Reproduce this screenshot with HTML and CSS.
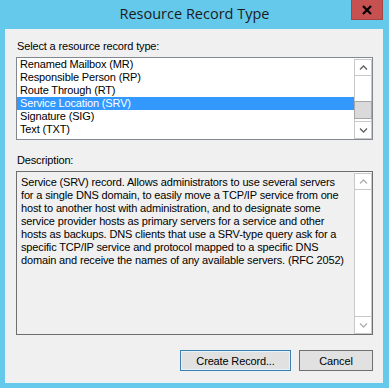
FILE: index.html
```html
<!DOCTYPE html>
<html lang="en">
<head>
  <meta charset="UTF-8" />
  <title>Resource Record Type</title>
  <link rel="stylesheet" href="styles.css">
</head>
<body>
  <div class="window">
    <div class="titlebar">
      <div class="title">Resource Record Type</div>
      <button class="close-btn" aria-label="Close">
        <svg viewBox="0 0 12 10" width="12" height="10">
          <path d="M2 1 L10 9 M10 1 L2 9" stroke="#000" stroke-width="2.2" fill="none"/>
        </svg>
      </button>
    </div>

    <div class="client">
      <div class="label">Select a resource record type:</div>
      <div class="listbox">
        <ul class="items">
          <li>Renamed Mailbox (MR)</li>
          <li>Responsible Person (RP)</li>
          <li>Route Through (RT)</li>
          <li class="selected">Service Location (SRV)</li>
          <li>Signature (SIG)</li>
          <li>Text (TXT)</li>
        </ul>
        <div class="scrollbar">
          <div class="sb-btn up">
            <svg viewBox="0 0 9 5" width="9" height="5"><path d="M1 4.5 L4.5 1 L8 4.5" /></svg>
          </div>
          <div class="sb-track">
            <div class="sb-thumb"></div>
          </div>
          <div class="sb-btn down">
            <svg viewBox="0 0 9 5" width="9" height="5"><path d="M1 0.5 L4.5 4 L8 0.5" /></svg>
          </div>
        </div>
      </div>

      <div class="label desc-label">Description:</div>
      <div class="description">
        <p class="desc-text">Service (SRV) record. Allows administrators to use several servers<br>
        for a single DNS domain, to easily move a TCP/IP service from one<br>
        host to another host with administration, and to designate some<br>
        service provider hosts as primary servers for a service and other<br>
        hosts as backups. DNS clients that use a SRV-type query ask for a<br>
        specific TCP/IP service and protocol mapped to a specific DNS<br>
        domain and receive the names of any available servers. (RFC 2052)</p>
        <div class="scrollbar disabled">
          <div class="sb-btn up">
            <svg viewBox="0 0 9 5" width="9" height="5"><path d="M1 4.5 L4.5 1 L8 4.5" /></svg>
          </div>
          <div class="sb-track"></div>
          <div class="sb-btn down">
            <svg viewBox="0 0 9 5" width="9" height="5"><path d="M1 0.5 L4.5 4 L8 0.5" /></svg>
          </div>
        </div>
      </div>

      <div class="buttons">
        <button class="btn default">Create Record...</button>
        <button class="btn cancel">Cancel</button>
      </div>
    </div>
  </div>
</body>
</html>
```

FILE: styles.css
```css
body {
  margin: 0;
  padding: 0;
  background: #64c9eb;
  font-family: "Liberation Sans", Arial, sans-serif;
  font-size: 11px;
  letter-spacing: -0.15px;
  color: #000;
}

.window {
  width: 389px;
  height: 388px;
  display: flex;
  flex-direction: column;
}

/* TITLE BAR */
.titlebar {
  position: relative;
  height: 29px;
  display: flex;
  justify-content: center;
}

.title {
  font-family: "Open Sans", "Noto Sans", sans-serif;
  font-size: 14.5px;
  letter-spacing: 0;
  color: #1c1c1c;
  line-height: 27px;
}

.close-btn {
  position: absolute;
  top: 0;
  right: 6px;
  width: 32px;
  height: 20px;
  padding: 0;
  border: 1px solid #a84343;
  border-top: none;
  background: #c75050;
  display: flex;
  align-items: center;
  justify-content: center;
}

/* CLIENT AREA */
.client {
  flex: 1;
  margin: 0 6px 5px 5px;
  background: #f0f0f0;
  padding: 11px 10px 12px 11px;
  display: flex;
  flex-direction: column;
}

.label {
  line-height: 13px;
  height: 13px;
  padding-left: 1px;
}

.listbox {
  margin-top: 4px;
  height: 81px;
  border: 1px solid #828790;
  background: #fff;
  display: flex;
}

.items {
  flex: 1;
  list-style: none;
  margin: 0;
  padding: 0;
}

.items li {
  height: 13px;
  line-height: 13px;
  padding-left: 3px;
  white-space: nowrap;
}

.items li.selected {
  background: #3399ff;
  color: #fff;
}

/* SCROLLBARS */
.scrollbar {
  width: 18px;
  padding-top: 1px;
  display: flex;
  flex-direction: column;
  background: #fff;
}

.sb-btn {
  box-sizing: border-box;
  border: 1px solid #c8c8c8;
  background: #fff;
  display: flex;
  align-items: center;
  justify-content: center;
}

.sb-btn.up {
  height: 17px;
}

.sb-btn.down {
  height: 18px;
}

.sb-btn svg path {
  fill: none;
  stroke: #606060;
  stroke-width: 1.3;
}

.sb-track {
  flex: 1;
  box-sizing: border-box;
  border-left: 1px solid #c8c8c8;
  border-right: 1px solid #c8c8c8;
}

.sb-thumb {
  margin: 25px -1px 0;
  height: 18px;
  box-sizing: border-box;
  border: 1px solid #a6a6a6;
  background: #dadada;
}

.scrollbar.disabled .sb-btn svg path {
  stroke: #b0b0b0;
}

.desc-label {
  margin-top: 14px;
}

.description {
  margin-top: 4px;
  height: 162px;
  border: 1px solid #6e6e6e;
  background: #f0f0f0;
  display: flex;
}

.desc-text {
  flex: 1;
  margin: 0;
  padding: 4px 0 0 4px;
  line-height: 13px;
  white-space: nowrap;
}

/* BUTTONS */
.buttons {
  margin-top: auto;
  display: flex;
  justify-content: flex-end;
  gap: 8px;
}

.btn {
  height: 21px;
  padding: 0;
  font-family: "Liberation Sans", Arial, sans-serif;
  font-size: 11px;
  letter-spacing: -0.15px;
  color: #000;
  background: #e1e1e1;
  border: 1px solid #adadad;
}

.btn.default {
  width: 111px;
  border: 1px solid #3c7fb1;
  box-shadow: inset 0 0 0 1px #e5f1fb;
}

.btn.cancel {
  width: 74px;
  border-color: #707070;
}
```
